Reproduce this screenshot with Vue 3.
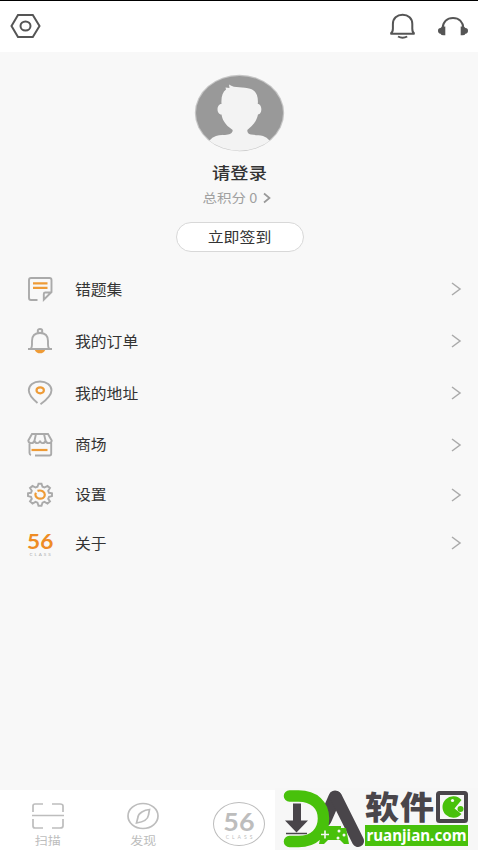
<script setup>
const menu = [
  { id: 'note', label: '错题集', height: 52 },
  { id: 'bell', label: '我的订单', height: 52 },
  { id: 'pin', label: '我的地址', height: 52 },
  { id: 'shop', label: '商场', height: 51 },
  { id: 'gear', label: '设置', height: 49 },
  { id: 'about', label: '关于', height: 48 },
]
</script>

<template>
  <div class="screen">
    <header class="topbar">
      <svg class="hex" width="32" height="26" viewBox="0 0 32 26">
        <path d="M9 2h14.800L30.500 13l-6.700 11H9L2.500 13z" />
        <ellipse cx="16.500" cy="13" rx="5" ry="4.500" />
      </svg>
      <svg class="bell-top" width="28" height="28" viewBox="0 0 28 28">
        <path d="M1.500 20.800h24c-2.200-1.200-2.200-3-2.200-5V11c0-5.500-4-9.300-9.700-9.300S3.900 5.500 3.900 11v4.800c0 2-.2 3.800-2.400 5z" />
        <path d="M9 23.500q4.600 2.600 9.200 0" />
      </svg>
      <svg class="phones" width="32" height="22" viewBox="0 0 32 22">
        <path d="M5.500 12.500C6 6 10 2 16 2s10 4 10.500 10.500" />
        <path class="cup" d="M8.300 10.500v8.700H6.500q-2.300 0-3-1.500Q1 17.500 1 14.800T3.500 12Q4.500 10 8.300 10.500zM23.700 10.500v8.700h1.800q2.300 0 3-1.500Q31 17.500 31 14.800T28.500 12Q27.500 10 23.700 10.500z" />
      </svg>
    </header>

    <section class="profile">
      <svg class="avatar" width="92" height="80" viewBox="0 0 92 80">
        <defs><clipPath id="face"><ellipse cx="46.500" cy="40" rx="44.500" ry="37.700" /></clipPath></defs>
        <ellipse cx="46.500" cy="40" rx="44.700" ry="38.200" fill="#c5c5c5" />
        <ellipse cx="46.500" cy="40" rx="43.500" ry="37" fill="#999" />
        <g clip-path="url(#face)" fill="#f3f3f3">
          <path d="M28.500 31C28 24 29.500 19 33 16.500l-.5-2 4 .5-.5-3.500C42 16 50 13 58 16c5 2 7.500 7 6.800 15 4.700 0 4.700 10.500.2 10.500-1 5-3 8-6.300 11.500L54.300 57c0 2.500.7 4 3.700 4.500 4 .8 8 .3 12 1.500q4 1 6.500 4.500L84 80H9l7.500-12.500Q19 64 23 63c4-1.200 8-.7 12-1.500 3-.5 4.700-2 4.700-4.500L34.500 53C31.500 49.500 29.500 47 28.500 41.500c-5.300 0-5.300-10.500 0-10.500z" />
        </g>
      </svg>
      <div class="login">请登录</div>
      <div class="points">
        <span>总积分 0</span>
        <svg width="10" height="12" viewBox="0 0 10 12"><path d="M2 1.500l5.500 4.500L2 10.500" /></svg>
      </div>
      <button class="sign"><span>立即签到</span></button>
    </section>

    <nav class="menu">
      <div v-for="item in menu" :key="item.id" class="row" :style="{ height: item.height + 'px' }">
        <div class="ico">
          <svg v-if="item.id === 'note'" viewBox="0 0 26 26">
            <path d="M10.500 24H4Q2 24 2 22V4Q2 2 4 2h18.500q2 0 2 2v12l-7.700 7.700V18q0-1.500 1.500-1.500h6" />
            <path class="orange" d="M6 7.300h14.500M6 11.800h14.500" />
          </svg>
          <svg v-else-if="item.id === 'bell'" viewBox="0 0 26 26">
            <path class="orange fill" d="M7.500 21.500h11c-1 3-3.500 3.800-5.500 3.800s-4.500-.8-5.500-3.800z" />
            <path d="M1 21h24M4 20.500q1-1.500 1-4v-3.500C5 8 8 5 13 5s8 3 8 8v3.500q0 2.500 1 4" />
            <ellipse cx="13" cy="3" rx="2.300" ry="2" />
          </svg>
          <svg v-else-if="item.id === 'pin'" viewBox="0 0 26 26">
            <path d="M10.500 23C5 18.500 1.800 15 1.800 10.300 1.800 5 6.500 1.500 13 1.500s11.500 3.500 11.500 8.800c0 5-4.800 9.500-11 14" />
            <ellipse class="orange" cx="13.200" cy="10.300" rx="3.700" ry="3" />
          </svg>
          <svg v-else-if="item.id === 'shop'" viewBox="0 0 26 26">
            <path d="M5 2h16l3.700 6.500c0 3.500-5.700 3.500-6.200 0-.5 3.500-5.200 3.500-5.500 0-.3 3.500-5 3.500-5.500 0-.5 3.500-6 3.500-6.200 0zM9 2L7.500 8.500M17 2l1.500 6.500M2.500 11v10q0 1.500 1.500 2M8 23.500h14.500q1.700 0 1.700-1.700V11" />
            <path class="orange" d="M4.500 18H20.500" />
          </svg>
          <svg v-else-if="item.id === 'gear'" viewBox="0 0 26 26">
            <path d="M10.500 4.700l1-3h3l1 3 2 .8 3-1.600L23 6l-1.800 2.800.8 2 3 .6v2.700l-3 .8-.8 1.900 1.800 2.600-2.500 2.100-3-1.600-2 .8-1 3h-3l-1-3-2-.8-3 1.600L3 19.400l1.800-2.600-.8-1.900-3-.8v-2.700l3-.6.8-2L3 6l2.500-2.100 3 1.600z" />
            <path class="orange" d="M10.500 8.900c4-1.300 7.300.8 7.300 3.800s-2.700 4-4.700 4-4.700-1.500-4.700-4q0-1 .6-2" />
          </svg>
          <div v-else class="brand"><b>56</b><small>CLASS</small></div>
        </div>
        <span class="label">{{ item.label }}</span>
        <svg class="chev" width="12" height="16" viewBox="0 0 12 16"><path d="M2 2l8 6-8 6" /></svg>
      </div>
    </nav>

    <footer class="tabs">
      <div class="tab">
        <svg width="34" height="29" viewBox="0 0 34 29"><path d="M2 10V4q0-2 2-2h8M21 2h8q3 0 3 2v6M2 17v7q0 2 2 2h8M21 26h8q3 0 3-2v-7M1 13.500h32" /></svg>
        <span>扫描</span>
      </div>
      <div class="tab">
        <svg width="34" height="29" viewBox="0 0 34 29"><ellipse cx="17" cy="14" rx="15" ry="12.500" /><path d="M23.500 7.500C18 8 12.500 11 12 15l-1.500 6C17 20 22 17 22.500 13z" /></svg>
        <span>发现</span>
      </div>
      <div class="round"><div class="brand"><b>56</b><small>CLASS</small></div></div>
    </footer>

    <aside class="watermark">
      <svg class="emblem" width="90" height="60" viewBox="0 0 90 60">
        <path d="M60 7L50 30" stroke="#49454a" stroke-width="13" stroke-linecap="round" />
        <path d="M14.500 6h9C39 6 48.500 15 48.500 28.500S39 51.500 23.500 51.500h-9" fill="none" stroke="#48c10b" stroke-width="11.500" stroke-linecap="round" />
        <path d="M61 7L83 51" stroke="#49454a" stroke-width="12" stroke-linecap="round" />
        <path d="M18 13.500h8v17h7L21.500 42.500 10 30.500h8z" fill="#49454a" />
        <path d="M11 43.500h21" stroke="#49454a" stroke-width="1.500" />
        <path d="M47 38h5v-2h14v2h5l3 16h-5l-4-4H53l-4 4h-5z" fill="#48c10b" />
        <path d="M54 44.500h8M58 40.500v8" stroke="#f7f7f7" stroke-width="1.600" transform="translate(-8 0)" />
        <g fill="#f7f7f7"><circle cx="64" cy="41" r="1.500" /><circle cx="69" cy="45" r="1.500" /><circle cx="63" cy="48" r="1.500" /></g>
      </svg>
      <div class="site">
        <div class="title">
          <span>软件</span>
          <svg width="32" height="33" viewBox="0 0 32 33">
            <rect x="2" y="2" width="28" height="28" rx="1.500" fill="#f7f7f7" stroke="#49454a" stroke-width="4" />
            <path d="M25.500 9A10.800 10.800 0 1 0 25.500 23l-7-5.500z" fill="#48c10b" />
            <circle cx="16.500" cy="9.500" r="1.600" fill="#f7f7f7" />
            <circle cx="24.500" cy="18" r="3" fill="#48c10b" />
          </svg>
        </div>
        <div class="url"><span>ruanjian.com</span></div>
      </div>
    </aside>
  </div>
</template>

<style>
body { background: #f8f8f8; overflow: hidden; }
</style>

<style scoped>
* { box-sizing: border-box; }
.screen { position: relative; width: 478px; height: 850px; background: #f8f8f8; display: flex; flex-direction: column; font-family: "Noto Sans CJK SC", sans-serif; overflow: hidden; }
svg { display: block; flex: none; fill: none; }
.topbar { height: 52px; flex: none; background: #fff; border-top: 1px solid #000; display: flex; align-items: flex-start; padding: 12px 9px 0 9px; }
.topbar svg { stroke: #555; stroke-width: 2; }
.hex { margin-right: auto; }
.bell-top { margin-right: 20px; }
.phones { margin-top: 3px; }
.topbar .cup { fill: #555; stroke: none; }
.profile { height: 211px; flex: none; display: flex; flex-direction: column; align-items: center; padding: 21px 0 0 1px; }
.avatar { margin-right: 1px; }
.login { font-size: 18.300px; line-height: 20px; height: 20px; margin-top: 9px; color: #333; font-weight: 500; transform: scaleY(.9); }
.points { display: flex; align-items: center; gap: 5px; height: 18px; margin: 7px 4px 0 0; font-size: 14.500px; line-height: 18px; color: #a0a0a0; }
.points span { transform: scaleY(.86); }
.points svg { stroke: #999; stroke-width: 1.700; }
.sign { width: 128px; height: 30px; margin-top: 15px; padding: 0; border: 1.500px solid #d8d8d8; border-radius: 15px; background: #fff; color: #333; font: 400 15.900px/26px "Noto Sans CJK SC", sans-serif; }
.sign span { display: block; transform: scaleY(.88); }
.menu { display: flex; flex-direction: column; }
.row { display: flex; align-items: center; padding: 0 16px 0 27px; }
.ico { width: 26px; height: 26px; flex: none; }
.ico svg { width: 26px; height: 26px; stroke: #aaa; stroke-width: 1.900; }
.ico svg .orange { stroke: #ee9b36; stroke-width: 2.200; }
.ico svg .fill { fill: #ee9b36; stroke: none; }
.label { margin: 1px 0 0 22px; flex: 1; font-size: 15.800px; line-height: 24px; color: #333; transform: scaleY(.91); }
.chev { stroke: #aaa; stroke-width: 1.500; }
.brand { display: flex; flex-direction: column; align-items: center; width: 26px; color: #ee8c25; font-family: Lato, sans-serif; }
.brand b { font-size: 21px; line-height: 22px; font-weight: 700; transform: scaleX(1.080); }
.brand small { font-size: 4.500px; line-height: 5px; letter-spacing: 2px; color: #aaa; margin-right: -2px; }
.tabs { height: 60px; margin-top: auto; background: #fff; display: flex; }
.tab { width: 95.500px; padding-top: 12px; display: flex; flex-direction: column; align-items: center; color: #bdbdbd; font-size: 13px; line-height: 18px; }
.tab svg { stroke: #bdbdbd; stroke-width: 1.700; }
.tab span { transform: scaleY(.9); }
.round { width: 52px; height: 44px; margin: 12px 0 0 22px; border: 1.600px solid #bdbdbd; border-radius: 50%; display: flex; justify-content: center; padding-top: 6px; }
.round .brand { color: #bdbdbd; }
.round .brand b { font-size: 24px; line-height: 26px; transform: scaleX(1.120); }
.round .brand small { font-size: 5px; letter-spacing: 3px; margin-right: -3px; color: #bdbdbd; }
.watermark { position: absolute; left: 275px; bottom: 0; width: 203px; height: 62px; padding-top: 2px; background: #f7f7f7; display: flex; }
.emblem { flex: none; }
.site { width: 103px; display: flex; flex-direction: column; }
.title { height: 35px; display: flex; justify-content: space-between; align-items: flex-start; padding-top: 1px; color: #49454a; font-size: 34px; line-height: 29px; font-weight: 900; }
.title span { width: 71px; letter-spacing: 1px; white-space: nowrap; transform: scaleY(.94); }
.url { height: 21px; background: #48c10b; color: #fff; font: 700 15.200px/20px "Noto Sans", sans-serif; display: flex; justify-content: center; }
</style>
